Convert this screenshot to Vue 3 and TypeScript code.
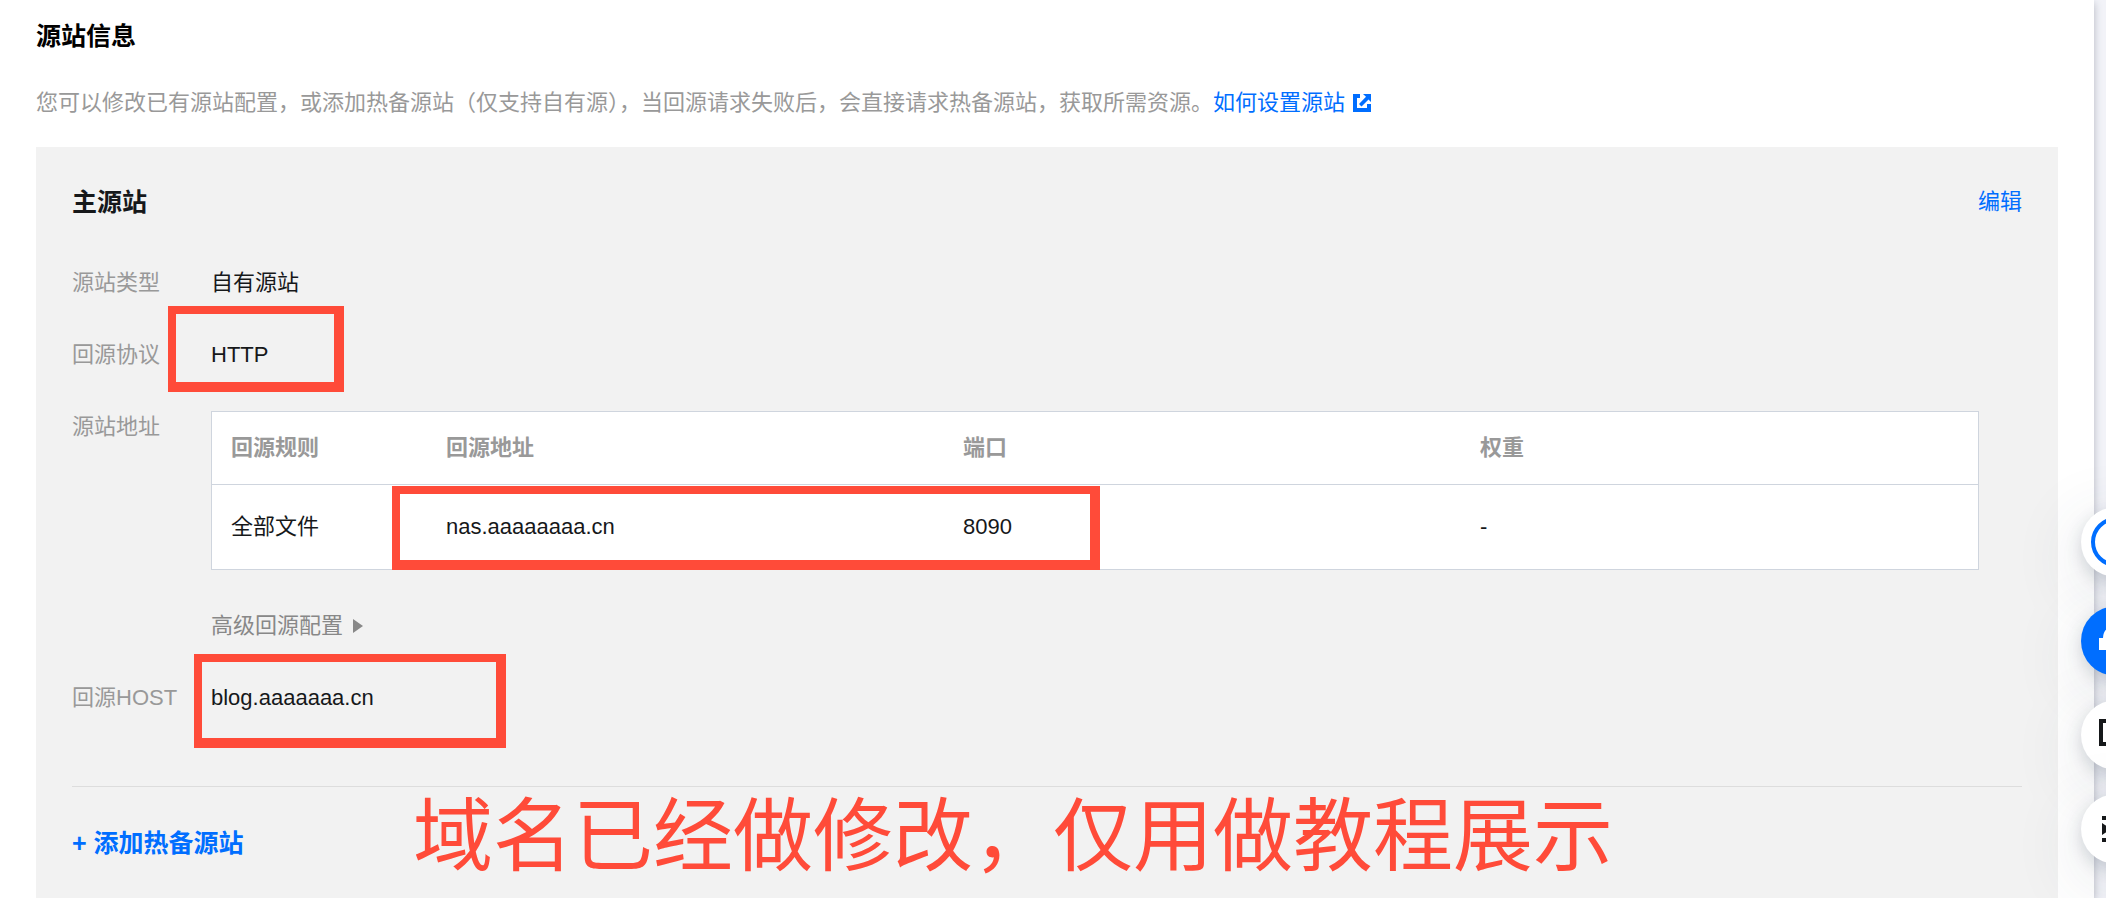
<script setup lang="ts">
interface OriginRule {
  rule: string
  address: string
  port: string
  weight: string
}

const columns: string[] = ['回源规则', '回源地址', '端口', '权重']
const rules: OriginRule[] = [
  { rule: '全部文件', address: 'nas.aaaaaaaa.cn', port: '8090', weight: '-' },
]
</script>

<template>
  <div class="page">
    <main class="card">
      <h2 class="title">源站信息</h2>
      <p class="desc">
        您可以修改已有源站配置，或添加热备源站（仅支持自有源），当回源请求失败后，会直接请求热备源站，获取所需资源。<a class="help" href="#">如何设置源站<svg class="ext" viewBox="0 0 18 18" aria-hidden="true"><path d="M0 0H7V4H4V14H14V10H18V18H0ZM10 0H18V8L15.500 5.500L8.500 12.500L6 10L13 2.800Z" fill="currentColor" /></svg></a>
      </p>

      <section class="panel">
        <header class="panel-head">
          <h3 class="title">主源站</h3>
          <a class="edit" href="#">编辑</a>
        </header>

        <dl class="form">
          <div class="row">
            <dt>源站类型</dt>
            <dd>自有源站</dd>
          </div>
          <div class="row">
            <dt>回源协议</dt>
            <dd>HTTP<span class="mark mark-protocol"></span></dd>
          </div>
          <div class="row">
            <dt>源站地址</dt>
            <dd>
              <div class="table-box">
                <table>
                  <thead>
                    <tr>
                      <th v-for="c in columns" :key="c" scope="col">{{ c }}</th>
                    </tr>
                  </thead>
                  <tbody>
                    <tr v-for="r in rules" :key="r.address">
                      <td>{{ r.rule }}</td>
                      <td>{{ r.address }}</td>
                      <td>{{ r.port }}</td>
                      <td>{{ r.weight }}</td>
                    </tr>
                  </tbody>
                </table>
                <span class="mark mark-address"></span>
              </div>
              <button class="advanced" type="button">高级回源配置<span class="caret"></span></button>
            </dd>
          </div>
          <div class="row">
            <dt>回源HOST</dt>
            <dd>blog.aaaaaaa.cn<span class="mark mark-host"></span></dd>
          </div>
        </dl>

        <footer class="panel-foot">
          <button class="add" type="button">+ 添加热备源站</button>
          <p class="note">域名已经做修改，仅用做教程展示</p>
        </footer>
      </section>
    </main>

    <aside class="floats">
      <button class="float first" type="button" aria-label="助手">
        <svg viewBox="0 0 70 70"><circle cx="35" cy="35" r="23" fill="none" stroke="#006eff" stroke-width="4" /></svg>
      </button>
      <button class="float blue" type="button" aria-label="客服">
        <svg viewBox="0 0 70 70"><path d="M18 44V32h4a13 13 0 0 1 26 0h4v12z" fill="#fff" /></svg>
      </button>
      <button class="float" type="button" aria-label="文档">
        <svg viewBox="0 0 70 70"><path d="M20 21h30v23H20z" fill="none" stroke="#16181a" stroke-width="4" /></svg>
      </button>
      <button class="float" type="button" aria-label="菜单">
        <svg viewBox="0 0 70 70"><path d="M21 22h28v4H21zM21 44h28v4H21zM21 29l9 6-9 6zM34 33h15v4H34z" fill="#16181a" /></svg>
      </button>
    </aside>
  </div>
</template>

<style>
body {
  margin: 0;
  background: #f2f3f8;
}
</style>

<style scoped>
.page {
  box-sizing: border-box;
  min-height: 100vh;
  padding-right: 12px;
  overflow: hidden;
  background: #f2f3f8;
  color: #16181a;
  font: 22px/32px "Liberation Sans", "Noto Sans CJK SC", sans-serif;
}
.card {
  box-sizing: border-box;
  min-height: 100vh;
  padding: 20px 36px 0;
  background: #fff;
  box-shadow: 0 3px 8px rgba(54, 58, 80, 0.32);
}
.title {
  margin: 0;
  font-size: 25px;
  line-height: 32px;
  font-weight: 700;
}
.card > .title {
  color: #000;
}
.desc {
  margin: 35px 0 28px;
  color: #999;
}
a {
  color: #006eff;
  text-decoration: none;
}
.ext {
  width: 18px;
  height: 18px;
  margin-left: 8px;
  vertical-align: -2px;
}
.panel {
  box-sizing: border-box;
  min-height: calc(100vh - 147px);
  padding: 39px 36px 24px;
  background: #f2f2f2;
}
.panel-head {
  display: flex;
  justify-content: space-between;
  align-items: center;
}
.form {
  margin: 49px 0 72px;
  display: flex;
  flex-direction: column;
  gap: 40px;
}
.row {
  display: flex;
}
dt {
  flex: 0 0 139px;
  color: #999;
}
dd {
  position: relative;
  flex: 1;
  margin: 0;
}
.table-box {
  position: relative;
  margin-right: 43px;
}
table {
  width: 100%;
  table-layout: fixed;
  border-collapse: separate;
  border-spacing: 0;
  border: 1px solid #cfd5de;
  background: #fff;
}
th,
td {
  padding: 20px 19px;
  text-align: left;
}
th {
  color: #999;
  font-weight: 700;
  border-bottom: 1px solid #cfd5de;
}
th:first-child {
  width: 177px;
}
td {
  padding: 26px 19px;
}
button {
  padding: 0;
  border: 0;
  background: none;
  font: inherit;
  cursor: pointer;
}
.advanced {
  display: flex;
  align-items: center;
  gap: 10px;
  margin-top: 40px;
  color: #888;
}
.caret {
  border-left: 10px solid #888;
  border-top: 7px solid transparent;
  border-bottom: 7px solid transparent;
}
.panel-foot {
  position: relative;
  display: flex;
  padding-top: 40px;
  border-top: 1px solid #ddd;
}
.add {
  color: #006eff;
  font-size: 25px;
  font-weight: 700;
}
.note {
  position: absolute;
  left: 341px;
  top: -8px;
  margin: 0;
  color: #ff4b39;
  font-size: 80px;
  line-height: 116px;
  white-space: nowrap;
}
.mark {
  position: absolute;
  box-sizing: border-box;
  border: solid #ff4b39;
  border-width: 8px 10px 10px 8px;
}
.mark-protocol {
  left: -43px;
  top: -33px;
  width: 176px;
  height: 86px;
}
.mark-address {
  left: 181px;
  top: 75px;
  width: 708px;
  height: 84px;
}
.mark-host {
  left: -17px;
  top: -28px;
  width: 312px;
  height: 94px;
}
.floats {
  position: fixed;
  right: -45px;
  top: 507px;
  display: flex;
  flex-direction: column;
  gap: 24px;
}
.float {
  position: relative;
  width: 70px;
  height: 70px;
  border-radius: 50%;
  background: #fff;
  box-shadow: 0 6px 16px rgba(54, 68, 90, 0.2), 0 16px 72px rgba(54, 68, 90, 0.16);
}
.first {
  margin-bottom: 5px;
}
.blue {
  background: #006eff;
}
.float svg {
  display: block;
}
</style>
